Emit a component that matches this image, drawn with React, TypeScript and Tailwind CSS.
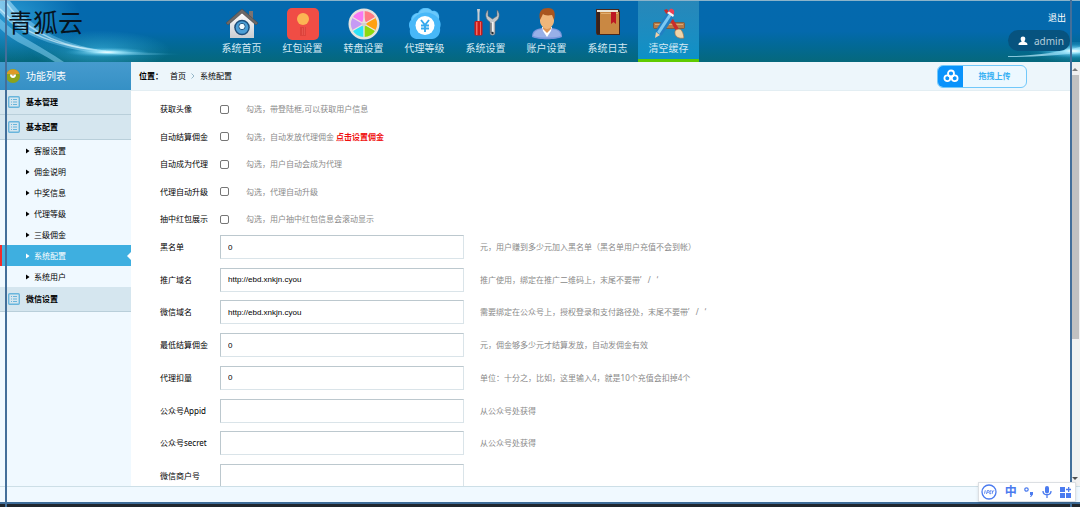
import type { ReactNode } from 'react';

function HomeIcon() {
  return (
    <svg viewBox="0 0 32 32" className="size-8" aria-hidden="true">
      <defs>
        <linearGradient id="wall" x1="0" y1="0" x2="0" y2="1">
          <stop offset="0" stopColor="#ffffff" />
          <stop offset="1" stopColor="#c9cdd2" />
        </linearGradient>
      </defs>
      <path d="M23 3h4v8h-4z" fill="#7d7371" />
      <path d="M4 15 16 4l12 11v15H4z" fill="url(#wall)" />
      <path d="M16 1 0 15l2 2L16 5l14 12 2-2z" fill="#6d6866" stroke="#4d4b4c" strokeWidth=".6" />
      <circle cx="16" cy="19.500" r="7.800" fill="#1d4f7c" />
      <circle cx="16" cy="19.500" r="6.300" fill="#4a9ed6" />
      <circle cx="16" cy="18.500" r="3.200" fill="#f2fbff" stroke="#245a86" strokeWidth="1" />
    </svg>
  );
}

function PacketIcon() {
  return (
    <svg viewBox="0 0 32 32" className="size-8" aria-hidden="true">
      <rect width="32" height="32" rx="5" fill="#f04d45" />
      <path d="M13 19h6v9h-6z" fill="#dd433c" />
      <path d="M15 20h1v7h-1zm2-1h1v8h-1z" fill="#e8544c" />
      <circle cx="16" cy="11" r="6" fill="#fcb553" />
    </svg>
  );
}

function WheelIcon() {
  return (
    <svg viewBox="0 0 32 32" className="size-8" aria-hidden="true">
      <circle cx="16" cy="16" r="15.500" fill="#e6e3df" />
      <path d="M16 16V3a13 13 0 0 1 11.300 6.500z" fill="#ff7b84" />
      <path d="M16 16 27.300 9.500a13 13 0 0 1 0 13z" fill="#ffa113" />
      <path d="M16 16 27.300 22.500A13 13 0 0 1 16 29z" fill="#8ed90d" />
      <path d="M16 16v13A13 13 0 0 1 4.700 22.500z" fill="#2ee2f7" />
      <path d="M16 16 4.700 22.500a13 13 0 0 1 0-13z" fill="#c69bf4" />
      <path d="M16 16 4.700 9.500A13 13 0 0 1 16 3z" fill="#f879f3" />
      <path d="M16 3v26M4.700 9.500l22.600 13M4.700 22.500l22.600-13" stroke="#eee5df" strokeWidth="1.300" />
      <circle cx="16" cy="16" r="2.500" fill="#d5d0cd" />
      <path d="m16 9 2 6h-4z" fill="#e8dfdc" />
    </svg>
  );
}

function AgentIcon() {
  return (
    <svg viewBox="0 0 32 32" className="size-8" aria-hidden="true">
      <path d="M9 5a8 8 0 0 1 14-2c5-1 8 3 7 8 2 4 2 6 1 9 1 6-3 11-8 11H9C3 31 0 27 1 21c-2-4-1-7 1-9 0-4 3-7 7-7z" fill="#48b8f8" />
      <path d="M10 5a8 8 0 0 1 13-2 7 7 0 0 1 7 8 16 16 0 0 0-27 2c0-5 3-8 7-8z" fill="#69c8fb" />
      <circle cx="16" cy="17.500" r="9.500" fill="#fff" />
      <path d="m12 12 4 5 4-5M16 17v7M12 17.500h8M12 20.500h8" fill="none" stroke="#36a9ee" strokeWidth="1.900" />
    </svg>
  );
}

function ToolsIcon() {
  return (
    <svg viewBox="0 0 32 32" className="size-8" aria-hidden="true">
      <path d="M7 1h3l-.5 4v9h-2V5z" fill="#c8ced4" />
      <rect x="4.500" y="13" width="8" height="14.500" rx="1.500" fill="#c91b1b" />
      <path d="M6 14h1.500v13H6zm4 0h1v13h-1z" fill="#f46a60" />
      <path d="M18 2c-4 4-2 10 2 12v11c0 3 5 3 5 0V14c4-2 6-8 2-12v6l-4.500 3L18 8z" fill="#c3c7ca" stroke="#62676b" strokeWidth=".6" />
      <path d="M22 14h1.500v11H22z" fill="#f5f5f3" />
      <path d="M20.500 15h1v10h-1z" fill="#575c61" />
      <circle cx="22.500" cy="25" r="1.200" fill="#222d36" />
    </svg>
  );
}

function UserIcon() {
  return (
    <svg viewBox="0 0 32 32" className="size-8" aria-hidden="true">
      <path d="M1 29c0-6 3-8 10-9h10c7 1 10 3 10 9-6 3-24 3-30 0z" fill="#7896dc" />
      <path d="M2 28c1-5 4-6 9-7l5 6 5-6c5 1 8 2 9 7-7 2-21 2-28 0z" fill="#98b0e8" />
      <path d="M11 19h10l-1 4-4 6-4-6z" fill="#fff" />
      <path d="M12 17h8v4l-4 4-4-4z" fill="#dd9659" />
      <path d="M9 8c0-8 14-8 14 0v5c0 4-4 8-7 8s-7-4-7-8z" fill="#f0b67a" />
      <path d="M9 12C7 3 11 0 17 0c6 0 8 4 6 12l-2-5c-5 1-8 0-9-1z" fill="#a8551f" />
    </svg>
  );
}

function BookIcon() {
  return (
    <svg viewBox="0 0 32 32" className="size-8" aria-hidden="true">
      <path d="M4 1h23l1 3v23H5l-1-2z" fill="#49281c" />
      <path d="M5 2h21v2H5z" fill="#ede6d8" />
      <path d="M8 4h19v22H8z" fill="#c98843" />
      <path d="M9 5h17v1H9z" fill="#e2ae70" />
      <path d="M5 4h3v22H5z" fill="#3a221c" />
      <path d="M19 4h5v12l-2.500-2-2.500 2z" fill="#bd1823" />
    </svg>
  );
}

function CleanIcon() {
  return (
    <svg viewBox="0 0 32 32" className="size-8" aria-hidden="true">
      <rect x=".5" y="14.500" width="31" height="6" rx="1" fill="#b97b46" stroke="#7f4f2d" strokeWidth=".7" />
      <path d="M2 16.500h28" stroke="#ddaa75" />
      <path d="m11 2 3-1 12 20-3 2z" fill="#c82d2b" />
      <path d="M22 23c4-4 8-2 9 7-5 1-10-1-9-7z" fill="#efd4a9" stroke="#9d704b" strokeWidth=".7" />
      <path d="m14 5 7 4L9 27l-7 3 1-8z" fill="#217fc3" />
      <path d="m16 6 2.500 1.500L6.500 26 4 24z" fill="#7bc8f2" />
      <path d="m3 24 4 3-5 3z" fill="#f1d0a4" />
      <path d="m15 4 2-3c2-1 5 1 4 4l-1 3z" fill="#ee3f54" />
      <path d="m14 5 2-1.500 5 3.500-1 2z" fill="#f5f5f5" />
    </svg>
  );
}

const navItems: { label: string; icon: ReactNode; active?: boolean }[] = [
  { label: '系统首页', icon: <HomeIcon /> },
  { label: '红包设置', icon: <PacketIcon /> },
  { label: '转盘设置', icon: <WheelIcon /> },
  { label: '代理等级', icon: <AgentIcon /> },
  { label: '系统设置', icon: <ToolsIcon /> },
  { label: '账户设置', icon: <UserIcon /> },
  { label: '系统日志', icon: <BookIcon /> },
  { label: '清空缓存', icon: <CleanIcon />, active: true },
];

const menuItems = ['客服设置', '佣金说明', '中奖信息', '代理等级', '三级佣金', '系统配置', '系统用户'];

const toggles = [
  { id: 'avatar', label: '获取头像', hint: '勾选，带登陆框,可以获取用户信息' },
  { id: 'settle', label: '自动结算佣金', hint: '勾选，自动发放代理佣金', link: '点击设置佣金' },
  { id: 'agent', label: '自动成为代理', hint: '勾选，用户自动会成为代理' },
  { id: 'upgrade', label: '代理自动升级', hint: '勾选，代理自动升级' },
  { id: 'packet', label: '抽中红包展示', hint: '勾选，用户抽中红包信息会滚动显示' },
];

const fields = [
  { id: 'blacklist', label: '黑名单', value: '0', hint: '元，用户赚到多少元加入黑名单（黑名单用户充值不会到帐）' },
  { id: 'promo', label: '推广域名', value: 'http://ebd.xnkjn.cyou', hint: '推广使用，绑定在推广二维码上，末尾不要带’\u00a0\u00a0\u00a0/\u00a0\u00a0\u00a0‘' },
  { id: 'wechat', label: '微信域名', value: 'http://ebd.xnkjn.cyou', hint: '需要绑定在公众号上，授权登录和支付路径处，末尾不要带’\u00a0\u00a0\u00a0/\u00a0\u00a0\u00a0‘' },
  { id: 'minimum', label: '最低结算佣金', value: '0', hint: '元，佣金够多少元才结算发放，自动发佣金有效' },
  { id: 'deduct', label: '代理扣量', value: '0', hint: '单位：十分之，比如，这里输入4，就是10个充值会扣掉4个' },
  { id: 'appid', label: '公众号Appid', value: '', hint: '从公众号处获得' },
  { id: 'secret', label: '公众号secret', value: '', hint: '从公众号处获得' },
  { id: 'merchant', label: '微信商户号', value: '', hint: '' },
];

function HeaderGlow() {
  return (
    <svg className="absolute left-0 top-0 h-full w-[220px]" viewBox="0 0 220 62" preserveAspectRatio="none" aria-hidden="true">
      <defs>
        <radialGradient id="flare">
          <stop offset="0" stopColor="#fff" />
          <stop offset=".25" stopColor="#a8ecff" stopOpacity=".85" />
          <stop offset="1" stopColor="#2fa9d7" stopOpacity="0" />
        </radialGradient>
        <linearGradient id="beam">
          <stop offset="0" stopColor="#a9dffa" stopOpacity=".9" />
          <stop offset=".3" stopColor="#63b9e4" stopOpacity=".6" />
          <stop offset=".6" stopColor="#c4f1ff" stopOpacity=".9" />
          <stop offset="1" stopColor="#27a0c9" stopOpacity="0" />
        </linearGradient>
        <radialGradient id="haze">
          <stop offset="0" stopColor="#41b8e8" stopOpacity=".6" />
          <stop offset="1" stopColor="#41b8e8" stopOpacity="0" />
        </radialGradient>
      </defs>
      <ellipse cx="10" cy="16" rx="70" ry="46" fill="url(#haze)" />
      <ellipse cx="100" cy="50" rx="70" ry="20" fill="url(#haze)" />
      <path d="M0 0h10c22 28 56 47 102 51 22 1 50 2 72 3-50 2-96 1-126-9C30 37 12 26 0 12z" fill="url(#beam)" opacity=".8" />
      <path d="M5 0c14 22 44 45 92 50" fill="none" stroke="#d6f5ff" strokeWidth="1.500" opacity=".6" />
      <path d="M0 8c18 20 48 38 106 43" fill="none" stroke="#e2f8ff" strokeWidth="1.500" opacity=".6" />
      <path d="M0 18c20 20 42 28 64 44h-9C34 48 14 43 0 28z" fill="#8fd8f8" opacity=".5" />
      <ellipse cx="107" cy="52" rx="42" ry="5" fill="url(#flare)" />
    </svg>
  );
}

function SectionTitle({ children }: { children: ReactNode }) {
  return (
    <button type="button" className="flex h-[25px] w-full shrink-0 items-center gap-1.5 border-b border-[#b9cfda] bg-[#d5e6ef] pl-2 text-left font-bold text-black">
      <svg viewBox="0 0 12 12" className="size-3" fill="none" stroke="#69b5dc" aria-hidden="true">
        <rect x=".7" y=".7" width="10.600" height="10.600" rx="1" strokeWidth="1.400" />
        <path d="M3 3.500h1M5 3.500h4M3 6h1M5 6h4M3 8.500h1M5 8.500h4" />
      </svg>
      {children}
    </button>
  );
}

function Header() {
  return (
    <header className="relative flex h-[62px] shrink-0 items-stretch overflow-hidden border-t border-[#8bb3ca] bg-linear-to-b from-[#0469ae] via-[#0469ac] to-[#06687c] text-[#d5e9f4]">
      <HeaderGlow />
      <svg className="absolute bottom-0 right-0 h-5 w-[72px]" viewBox="0 0 72 20" preserveAspectRatio="none" aria-hidden="true">
        <ellipse cx="70" cy="9" rx="50" ry="12" fill="url(#haze)" />
        <path d="M0 14C28 14 50 10 72 5v6C50 13 28 15 0 15z" fill="#bceeff" opacity=".7" />
        <ellipse cx="66" cy="9" rx="36" ry="7" fill="url(#flare)" />
      </svg>
      <h1 className="relative w-[211px] shrink-0 pl-2 text-[25px] leading-[42px] font-normal text-[#06141f]">青狐云</h1>
      <nav className="relative flex">
        {navItems.map((item) => (
          <a
            key={item.label}
            href="#"
            className={
              item.active
                ? 'flex w-[61px] flex-col items-center border-b-[3px] border-[#5fca00] bg-linear-to-b from-[#2787b9] to-[#0b91c7] pt-[7px]'
                : 'flex w-[61px] flex-col items-center pt-[7px]'
            }
          >
            {item.icon}
            <span className="text-[10px] leading-4">{item.label}</span>
          </a>
        ))}
      </nav>
      <div className="relative ml-auto flex flex-col items-end pr-2.5 pt-2.5">
        <a href="#" className="pr-1 text-[9px] leading-3.5 text-white">退出</a>
        <button type="button" className="mt-[5px] flex h-[21px] w-[62px] items-center gap-1.5 rounded-full bg-[#07537f] pl-2.5 text-[10px] text-[#b3cddd]">
          <svg viewBox="0 0 10 10" className="size-2.5" fill="#fff" aria-hidden="true">
            <path d="M5 .5c3 0 2.700 3.500 1.300 5C7 6.500 9.500 6 9.500 9H.5c0-3 2.500-2.500 3.200-3.500C2.300 4 2 .5 5 .5z" />
          </svg>
          admin
        </button>
      </div>
    </header>
  );
}

function Sidebar() {
  return (
    <aside className="flex w-[131px] shrink-0 flex-col bg-[#f0f9ff]">
      <div className="flex h-7 shrink-0 items-center gap-1.5 bg-linear-to-b from-[#469bce] to-[#3590c5] pl-1.5 text-[10px] text-white">
        <svg viewBox="0 0 14 14" className="size-3.5" aria-hidden="true">
          <circle cx="7" cy="7" r="7" fill="#8ba31c" />
          <path d="M.5 5a7 7 0 0 1 13 0z" fill="#de9a28" />
          <path d="M4 5.500h6C10 7.500 9 9 7 9S4 7.500 4 5.500z" fill="#fff" />
          <path d="M5.500 5.500h3L7 7z" fill="#de7a28" />
        </svg>
        功能列表
      </div>
      <SectionTitle>基本管理</SectionTitle>
      <SectionTitle>基本配置</SectionTitle>
      <ul className="shrink-0">
        {menuItems.map((name) => {
          const active = name === '系统配置';
          return (
            <li key={name}>
              <a
                href="#"
                className={
                  active
                    ? 'flex h-[21px] items-center border-l-2 border-[#f12b2b] bg-[#3eafe0] pl-6 text-white'
                    : 'flex h-[21px] items-center border-l-2 border-transparent pl-6 text-black'
                }
              >
                <svg viewBox="0 0 4 6" className="mr-1 h-1.5 w-1" fill="currentColor" aria-hidden="true">
                  <path d="M0 .5 3.500 3 0 5.500z" />
                </svg>
                {name}
                {active && (
                  <svg viewBox="0 0 4 8" className="ml-auto h-2 w-1" fill="#fff" aria-hidden="true">
                    <path d="M4 0v8L0 4z" />
                  </svg>
                )}
              </a>
            </li>
          );
        })}
      </ul>
      <SectionTitle>微信设置</SectionTitle>
    </aside>
  );
}

function Breadcrumb() {
  return (
    <div className="flex h-[29px] shrink-0 items-center border-b border-[#e3eef3] bg-[#edf6fb] pl-2 pr-[43px] text-black">
      <span className="w-[31px] font-bold">位置：</span>
      <a href="#">首页</a>
      <svg viewBox="0 0 4 6" className="mx-[5px] h-1.5 w-1" fill="none" stroke="#95b6c8" aria-hidden="true">
        <path d="m.5.5 2.500 2.500L.5 5.500" />
      </svg>
      <a href="#">系统配置</a>
      <button type="button" className="ml-auto flex h-[23px] w-[90px] items-stretch overflow-hidden rounded-md border border-[#71c8fa] bg-[#ecf8ff] font-bold text-[#39b1f3]">
        <span className="flex w-[25px] items-center justify-center bg-[#0a93fb]">
          <svg viewBox="0 0 16 14" className="h-3.5 w-4" fill="none" stroke="#fff" strokeWidth="1.800" aria-hidden="true">
            <circle cx="8" cy="4.500" r="3" />
            <circle cx="4.300" cy="9.300" r="2.900" />
            <circle cx="11.700" cy="9.300" r="2.900" />
          </svg>
        </span>
        <span className="flex flex-1 items-center justify-center">拖拽上传</span>
      </button>
    </div>
  );
}

function SettingsForm() {
  return (
    <form className="min-h-0 flex-1 overflow-hidden bg-white pl-[29px] pt-[9px] text-black">
      <div className="flex h-32 flex-col justify-between">
        {toggles.map((t) => (
          <div key={t.id} className="flex h-[18px] items-center">
            <label htmlFor={t.id} className="w-[60px]">{t.label}</label>
            <input
              id={t.id}
              type="checkbox"
              className="size-[9px] appearance-none rounded-xs border border-[#767676] bg-white checked:bg-[#0a73e8]"
            />
            <span className="pl-[17px] text-[#8a8a8a]">
              {t.hint}
              {t.link && <a href="#" className="ml-0.5 font-bold text-[#f01010]">{t.link}</a>}
            </span>
          </div>
        ))}
      </div>
      <div className="mt-[7px] flex h-[253px] flex-col justify-between">
        {fields.map((f) => (
          <div key={f.id} className="flex h-6 items-center">
            <label htmlFor={f.id} className="w-[60px] shrink-0">{f.label}</label>
            <input
              id={f.id}
              type="text"
              defaultValue={f.value}
              className="h-6 w-[244px] border border-t-[#bcc8ce] border-r-[#dae4e9] border-b-[#dae4e9] border-l-[#bcc8ce] bg-white px-[7px] font-['Liberation_Sans',sans-serif] text-black outline-none"
            />
            <span className="pl-4 text-[#8a8a8a]">{f.hint}</span>
          </div>
        ))}
      </div>
    </form>
  );
}

function ScrollTrack() {
  return (
    <div className="flex w-2.5 shrink-0 flex-col items-center bg-[#f1f1f1] py-1.5" aria-hidden="true">
      <svg viewBox="0 0 6 3" className="h-[3px] w-1.5" fill="#7b7b7b"><path d="M0 3 3 0l3 3z" /></svg>
      <div className="mt-1 h-[64%] w-[7px] bg-[#c1c1c1]" />
      <svg viewBox="0 0 6 3" className="mt-auto h-[3px] w-1.5" fill="#505050"><path d="M0 0h6L3 3z" /></svg>
    </div>
  );
}

function InputMethodBar() {
  return (
    <div className="absolute bottom-[5px] right-1 flex h-5 w-[98px] items-center justify-between border border-[#dcdfe3] bg-white pl-0.5 pr-1 text-[#4b7bef] shadow-sm">
      <svg viewBox="0 0 16 16" className="size-4" fill="none" stroke="currentColor" aria-hidden="true">
        <circle cx="8" cy="8" r="7" strokeWidth="1.300" />
        <path d="M3.500 9.700 4.300 6.300M5.500 10l.9-3.500h1.200c1.100 0 .9 1.900-.4 1.900H6.300M9.500 6.300l-.8 3.400h1.300M10.800 6.300l.7 1.700 1.500-1.700M11.500 8l-.4 1.900" strokeWidth=".9" />
      </svg>
      <span className="text-[12px] leading-none font-bold">中</span>
      <svg viewBox="0 0 10 10" className="size-2.5" aria-hidden="true">
        <circle cx="2.500" cy="2.500" r="1.700" fill="none" stroke="currentColor" strokeWidth="1.200" />
        <path d="M6 5h3v2.500L7 10H6l1-2H6z" fill="currentColor" />
      </svg>
      <svg viewBox="0 0 10 12" className="h-3 w-2.5" aria-hidden="true">
        <rect x="3" y="0" width="4" height="7.500" rx="2" fill="currentColor" />
        <path d="M1 5c0 5 8 5 8 0M5 9v3" fill="none" stroke="currentColor" strokeWidth="1.300" />
      </svg>
      <svg viewBox="0 0 11 11" className="size-[11px]" fill="currentColor" aria-hidden="true">
        <path d="M0 0h5v5H0zM0 6h5v5H0zM6 6h5v5H6zM8 0h1.300v1.800H11v1.400H9.300V5H8V3.200H6V1.800h2z" />
      </svg>
    </div>
  );
}

export default function App() {
  return (
    <div className="relative flex h-screen flex-col overflow-hidden bg-[#f0f9ff] font-['Noto_Sans','Noto_Sans_CJK_SC',sans-serif] text-[8px] leading-3">
      <Header />
      <div className="flex min-h-0 flex-1">
        <Sidebar />
        <main className="flex min-w-0 flex-1 flex-col">
          <Breadcrumb />
          <SettingsForm />
        </main>
        <ScrollTrack />
      </div>
      <footer className="h-4 shrink-0 border-t border-[#cddfe7]" />
      <div className="h-[5px] shrink-0 border-t-2 border-[#3e6c98] bg-[#20272e]" />
      <div className="pointer-events-none absolute inset-y-0 left-[5px] right-2 border-x-2 border-[#436f9a]" />
      <InputMethodBar />
    </div>
  );
}
